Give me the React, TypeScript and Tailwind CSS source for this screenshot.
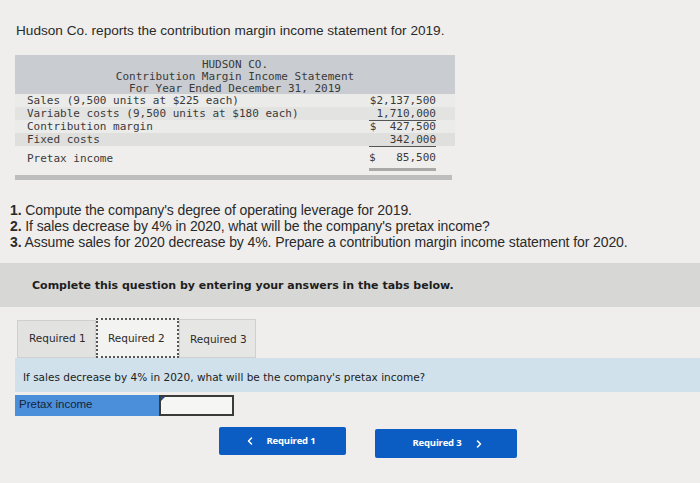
import { ChevronLeft, ChevronRight } from 'lucide-react'

const rows = [
  { label: 'Sales (9,500 units at $225 each)', value: '$2,137,500', shade: 'bg-[#ebebea]', line: '' },
  { label: 'Variable costs (9,500 units at $180 each)', value: '1,710,000', shade: 'bg-[#e3e3e2]', line: 'single' },
  { label: 'Contribution margin', value: '$  427,500', shade: 'bg-[#ebebea]', line: '' },
  { label: 'Fixed costs', value: '342,000', shade: 'bg-[#dfdfde]', line: 'single' },
]

export default function App() {
  return (
    <div className="w-[700px] h-[483px] overflow-hidden bg-[#efeeec] text-[#222] font-['Liberation_Sans',Arial,sans-serif]">
      {/* Intro */}
      <p className="pt-[22px] pl-4 text-[13.6px] leading-[18px] text-[#2a2a2a]">
        Hudson Co. reports the contribution margin income statement for 2019.
      </p>

      {/* Income statement */}
      <div className="mt-[15px] ml-[15px] w-[440px] font-['DejaVu_Sans_Mono',monospace] text-[11px] text-[#3a3a3a]">
        <div className="bg-[#c9ccd0] h-[39px] pt-[4px] flex flex-col items-center leading-[12px]">
          <div>HUDSON CO.</div>
          <div>Contribution Margin Income Statement</div>
          <div>For Year Ended December 31, 2019</div>
        </div>
        {rows.map((r) => (
          <div key={r.label} className={`flex items-center h-[13px] leading-[13px] pl-[12px] pr-[19px] ${r.shade}`}>
            <span className="flex-1">{r.label}</span>
            <span
              className={`w-[67px] text-right whitespace-pre ${r.line === 'single' ? 'border-b border-[#555]' : ''}`}
            >
              {r.value}
            </span>
          </div>
        ))}
        <div className="flex items-center h-[24px] pl-[12px] pr-[19px] bg-[#efeeec]">
          <span className="flex-1 mt-[2px]">Pretax income</span>
          <span className="w-[67px] flex justify-between border-b-[3px] border-[#a9a9a9] pb-[1px] mt-[5px]">
            <span>$</span>
            <span>85,500</span>
          </span>
        </div>
        <div className="mt-[5px] h-[5px] w-[437px] bg-[#bdbdbd]" />
      </div>

      {/* Questions */}
      <div className="mt-[22px] pl-[10px] text-[14px] leading-[16px] text-[#2a2a2a] tracking-[-0.1px]">
        <p><b>1.</b> Compute the company's degree of operating leverage for 2019.</p>
        <p><b>2.</b> If sales decrease by 4% in 2020, what will be the company's pretax income?</p>
        <p><b>3.</b> Assume sales for 2020 decrease by 4%. Prepare a contribution margin income statement for 2020.</p>
      </div>

      <div className="mt-[13px] h-[44px] bg-[#d7d7d5] flex items-center pl-[32px] pt-[3px]">
        <span className="font-['DejaVu_Sans',Verdana,sans-serif] font-bold text-[11px] text-[#1e1e1e]">
          Complete this question by entering your answers in the tabs below.
        </span>
      </div>

      {/* Tabs */}
      <div className="mt-[11px] ml-[17px] flex items-end h-[40px] font-['DejaVu_Sans',Verdana,sans-serif] text-[10.5px] text-[#2a2a2a]">
        <div className="w-[79px] h-[38px] bg-[#e2e2e1] border border-[#cfcfcf] flex items-center pl-[11px]">Required 1</div>
        <div className="w-[83px] h-[40px] bg-[#f3f3f2] border-2 border-dotted border-[#555] flex items-center pl-[10px] pt-[2px]">Required 2</div>
        <div className="w-[77px] h-[39px] bg-[#e6e6e5] border border-[#cfcfcf] flex items-center pl-[10px] pt-[3px]">Required 3</div>
      </div>

      <div className="ml-[15px] h-[34px] bg-[#d0e1eb] flex items-center pl-[8px] pt-[5px] font-['DejaVu_Sans',Verdana,sans-serif] text-[10.5px] text-[#222]">
        If sales decrease by 4% in 2020, what will be the company's pretax income?
      </div>

      <div className="mt-[3px] ml-[15px] flex h-[21px]">
        <div className="w-[144px] bg-[#4b8fdb] text-[11.5px] text-[#15243a] pl-[4px] leading-[19px]">Pretax income</div>
        <div className="relative w-[75px] bg-[#f6f6f5] border-2 border-[#3a3a3a]">
          <span className="absolute left-0 top-0 w-0 h-0 border-t-[4px] border-r-[4px] border-t-[#1b4f9c] border-r-transparent" />
        </div>
      </div>

      {/* Navigation */}
      <div className="mt-[11px] ml-[219px] flex items-start gap-[29px] font-['Open_Sans',Arial,sans-serif] font-bold text-[9.5px] text-white">
        <button className="w-[127px] h-[28px] bg-[#0b5dc3] rounded-[2px] flex items-center justify-center gap-[11px] pr-[6px]">
          <ChevronLeft size={12} strokeWidth={3} />
          <span className="tracking-[-0.2px]">Required 1</span>
        </button>
        <button className="mt-[2px] w-[142px] h-[29px] bg-[#0b5dc3] rounded-[2px] flex items-center justify-center gap-[12px] pl-[6px]">
          <span className="tracking-[-0.2px]">Required 3</span>
          <ChevronRight size={12} strokeWidth={3} />
        </button>
      </div>
    </div>
  )
}
